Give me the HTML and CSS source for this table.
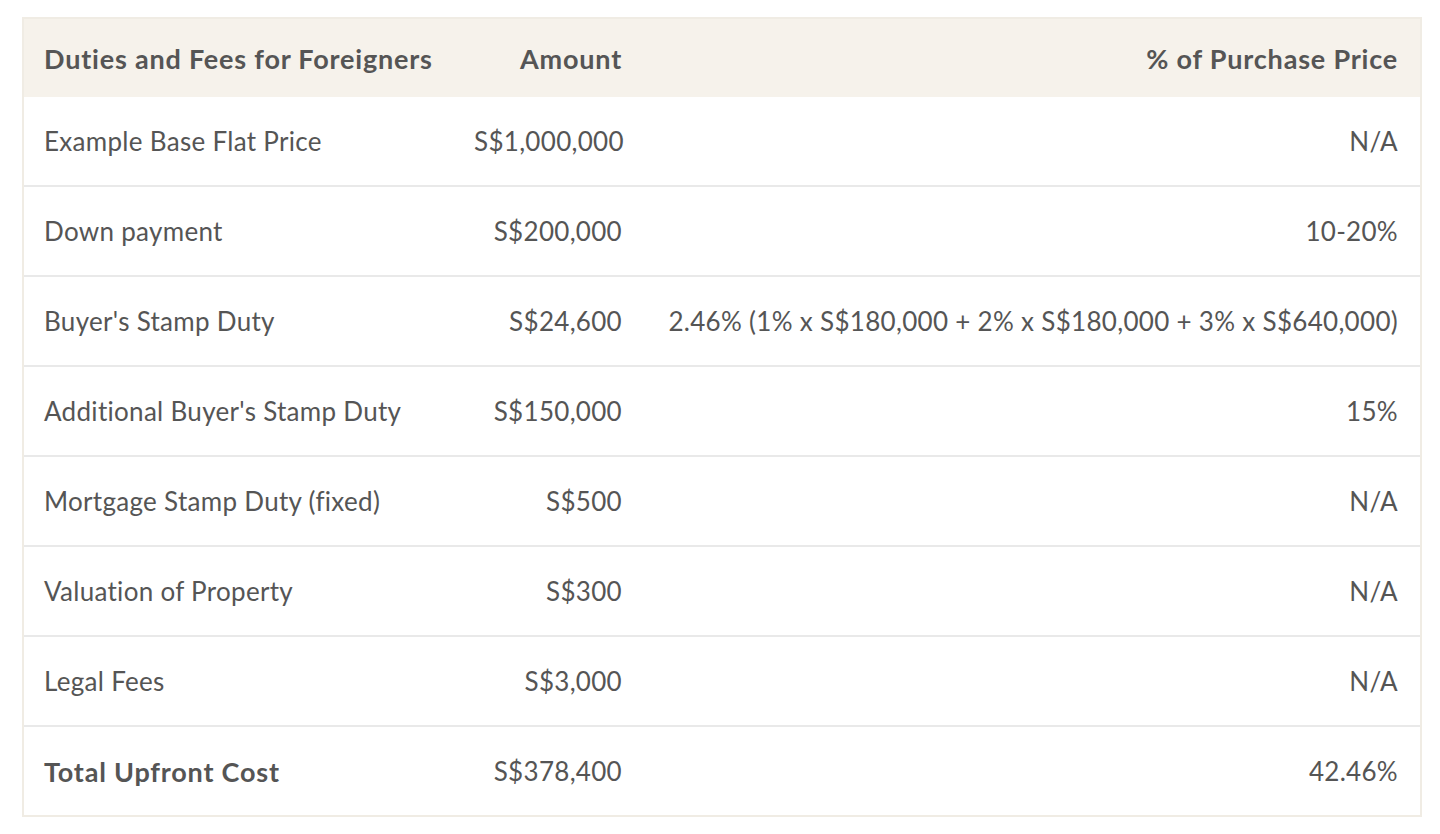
FILE: index.html
```html
<!DOCTYPE html>
<html lang="en">
<head>
<meta charset="utf-8">
<title>Duties and Fees for Foreigners</title>
<link rel="stylesheet" href="styles.css">
</head>
<body>
<div class="wrap">
<table class="fees">
  <colgroup>
    <col class="c1"><col class="c2"><col class="c3">
  </colgroup>
  <thead>
    <tr><th>Duties and Fees for Foreigners</th><th class="r">Amount</th><th class="r">% of Purchase Price</th></tr>
  </thead>
  <tbody>
    <tr><td>Example Base Flat Price</td><td class="r">S$1,000,000</td><td class="r">N/A</td></tr>
    <tr><td>Down payment</td><td class="r">S$200,000</td><td class="r">10-20%</td></tr>
    <tr><td>Buyer's Stamp Duty</td><td class="r">S$24,600</td><td class="r">2.46% (1% x S$180,000 + 2% x S$180,000 + 3% x S$640,000)</td></tr>
    <tr><td>Additional Buyer's Stamp Duty</td><td class="r">S$150,000</td><td class="r">15%</td></tr>
    <tr><td>Mortgage Stamp Duty (fixed)</td><td class="r">S$500</td><td class="r">N/A</td></tr>
    <tr><td>Valuation of Property</td><td class="r">S$300</td><td class="r">N/A</td></tr>
    <tr><td>Legal Fees</td><td class="r">S$3,000</td><td class="r">N/A</td></tr>
    <tr><td class="b">Total Upfront Cost</td><td class="r">S$378,400</td><td class="r">42.46%</td></tr>
  </tbody>
</table>
</div>
</body>
</html>
```
FILE: styles.css
```css
html, body { margin: 0; padding: 0; background: #fff; }
body { padding: 17px 18px 0 22px; font-family: "Source Sans Pro", Lato, "Liberation Sans", sans-serif; color: #555; }
.wrap { width: 1400px; box-sizing: border-box; border: 2px solid #f0ece4; }
.fees { width: 100%; border-collapse: collapse; table-layout: fixed; font-size: 26px; letter-spacing: 0.3px; font-variant-ligatures: none; }
.c1 { width: 430px; }
.c2 { width: 190px; }
.fees th { background: #f6f2eb; height: 78px; font-size: 27px; font-weight: 700; letter-spacing: 0.8px; text-align: left; padding: 0 22px 0 20px; vertical-align: middle; white-space: nowrap; }
.fees td { height: 88px; padding: 0 22px 0 20px; vertical-align: middle; border-top: 2px solid #e9e9e9; white-space: nowrap; }
.fees tbody tr:first-child td { border-top: none; }
.fees .r { text-align: right; }
.fees .b { font-size: 27px; font-weight: 700; letter-spacing: 0.8px; }
```
